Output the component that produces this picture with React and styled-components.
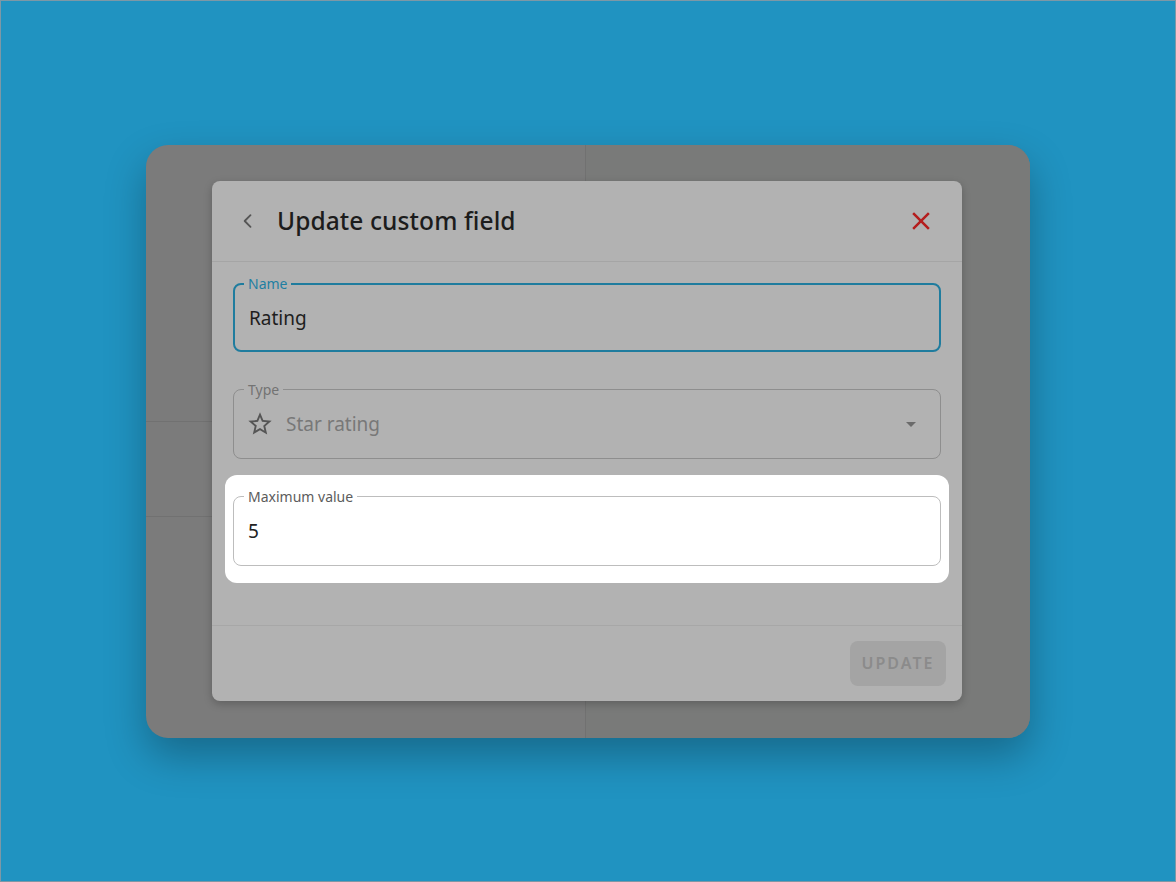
import React from 'react'
import styled, {createGlobalStyle} from 'styled-components'

const Global = createGlobalStyle`
    html, body {
        margin: 0;
        padding: 0;
    }
    body {
        font-family: "Noto Sans", "Open Sans", sans-serif;
    }
    * { box-sizing: border-box; }
`

const Page = styled.div`
    width: 100vw;
    height: 100vh;
    background: #2093c1;
    border: 1px solid #7d98a6;
    display: flex;
    align-items: center;
    justify-content: center;
`

const Window = styled.div`
    position: relative;
    width: 884px;
    height: 593px;
    border-radius: 22px;
    overflow: hidden;
    background: #7b7b7b;
    box-shadow: 0 18px 40px rgba(0,0,0,0.28);
    display: grid;
    grid-template-columns: 440px 1fr;
`

const LeftPanel = styled.div`
    display: flex;
    flex-direction: column;
    border-right: 1px solid #717171;
`

const PanelRow = styled.div`
    height: ${p => p.$h}px;
    border-bottom: 1px solid #717171;
`

const RightPanel = styled.div`
    background: #797a79;
`

const Dialog = styled.div`
    position: absolute;
    left: 66px;
    top: 36px;
    width: 750px;
    background: #b2b2b2;
    border-radius: 8px;
    box-shadow: 0 3px 8px rgba(0,0,0,0.22);
    display: flex;
    flex-direction: column;
`

const Header = styled.div`
    height: 81px;
    border-bottom: 1px solid #a5a5a5;
    display: flex;
    align-items: center;
    padding: 0 26px 0 26px;
`

const IconBtn = styled.button`
    border: 0;
    background: none;
    padding: 0;
    display: flex;
    align-items: center;
    justify-content: center;
    cursor: pointer;
`

const Title = styled.h2`
    margin: 0 0 0 19px;
    flex: 1;
    font-size: 24.5px;
    font-weight: 500;
    color: #1c1c1c;
    letter-spacing: 0.1px;
`

const Content = styled.div`
    padding: 12px 21px 59px;
    display: flex;
    flex-direction: column;
    gap: 28px;
`

const Highlight = styled.div`
    background: #fff;
    border-radius: 12px;
    margin: -12px -8px -17px;
    padding: 12px 8px 17px;
`

const Field = styled.fieldset`
    margin: 0;
    height: ${p => p.$focused ? 78 : 79}px;
    padding: 0 14px;
    border: ${p => p.$focused ? '2px solid #1f7c9e' : `1px solid ${p.$border}`};
    border-radius: 8px;
    min-width: 0;
`

const Legend = styled.legend`
    margin-left: ${p => p.$focused ? '-5px' : '-4px'};
    padding: 0 4px;
    font-size: 14px;
    line-height: 20px;
    color: ${p => p.$color};
`

const Row = styled.div`
    margin-top: -9px;
    height: 66px;
    display: flex;
    align-items: center;
    gap: 12px;
`

const Value = styled.span`
    flex: 1;
    font-size: 19px;
    color: ${p => p.$color};
`

const Footer = styled.div`
    height: 76px;
    border-top: 1px solid #a7a7a7;
    display: flex;
    align-items: center;
    justify-content: flex-end;
    padding: 0 16px 0 0;
`

const UpdateButton = styled.button`
    width: 96px;
    height: 45px;
    border: 0;
    border-radius: 8px;
    background: #a4a4a4;
    color: #8b8b8b;
    font-family: "Noto Sans", sans-serif;
    font-size: 16px;
    font-weight: 600;
    letter-spacing: 2px;
`

function BackIcon() {
    return (
        <svg width="20" height="20" viewBox="0 0 24 24" fill="none" stroke="#555" strokeWidth="2.2" strokeLinecap="round" strokeLinejoin="round">
            <path d="M15 5l-7 7 7 7" />
        </svg>
    )
}

function CloseIcon() {
    return (
        <svg width="30" height="30" viewBox="0 0 24 24" fill="#b41f1f">
            <path d="M19 6.41L17.59 5 12 10.59 6.41 5 5 6.41 10.59 12 5 17.59 6.41 19 12 13.41 17.59 19 19 17.59 13.41 12z" />
        </svg>
    )
}

function StarIcon() {
    return (
        <svg width="28" height="28" viewBox="0 0 24 24" fill="#555" style={{marginLeft: -2}}>
            <path d="M22 9.24l-7.19-.62L12 2 9.19 8.63 2 9.24l5.46 4.730L5.82 21 12 17.27 18.18 21l-1.63-7.03L22 9.24zM12 15.4l-3.76 2.27 1-4.28-3.32-2.88 4.38-.38L12 6.1l1.71 4.04 4.38.38-3.32 2.88 1 4.28L12 15.4z" />
        </svg>
    )
}

function DropIcon() {
    return (
        <svg width="24" height="24" viewBox="0 0 24 24" fill="#6b6b6b" style={{marginRight: 3}}>
            <path d="M7 10l5 5 5-5z" />
        </svg>
    )
}

export default function App() {
    return (
        <>
            <Global />
            <Page>
                <Window>
                    <LeftPanel>
                        <PanelRow $h={277} />
                        <PanelRow $h={95} />
                    </LeftPanel>
                    <RightPanel />
                    <Dialog>
                        <Header>
                            <IconBtn><BackIcon /></IconBtn>
                            <Title>Update custom field</Title>
                            <IconBtn><CloseIcon /></IconBtn>
                        </Header>
                        <Content>
                            <Field $focused>
                                <Legend $focused $color="#1f7fa2">Name</Legend>
                                <Row>
                                    <Value $color="#1e1e1e">Rating</Value>
                                </Row>
                            </Field>
                            <Field $border="#8e8e8e">
                                <Legend $color="#737373">Type</Legend>
                                <Row>
                                    <StarIcon />
                                    <Value $color="#787878">Star rating</Value>
                                    <DropIcon />
                                </Row>
                            </Field>
                            <Highlight>
                                <Field $border="#bdbdbd">
                                    <Legend $color="#5c5c5c">Maximum value</Legend>
                                    <Row>
                                        <Value $color="#222">5</Value>
                                    </Row>
                                </Field>
                            </Highlight>
                        </Content>
                        <Footer>
                            <UpdateButton>UPDATE</UpdateButton>
                        </Footer>
                    </Dialog>
                </Window>
            </Page>
        </>
    )
}
